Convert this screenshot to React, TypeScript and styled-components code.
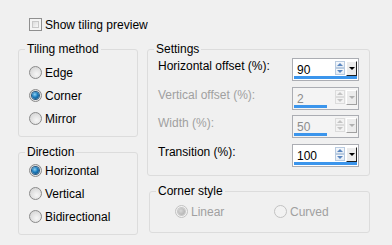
import styled, { createGlobalStyle, css } from "styled-components";

const GlobalStyle = createGlobalStyle`
    body {
        margin: 0;
        background-color: #f0f0f0;
        font-family: "Liberation Sans", Arial, sans-serif;
        font-size: 12px;
        color: #000;
    }
`;

const Page = styled.div`
    width: 392px;
    height: 245px;
    padding: 18px 0 0 18px;
    box-sizing: border-box;
    background-color: #f0f0f0;
`;

const TopRow = styled.label`
    display: flex;
    align-items: center;
    gap: 3px;
    height: 13px;
    padding-left: 11px;
`;

const CheckBox = styled.span`
    width: 13px;
    height: 13px;
    box-sizing: border-box;
    border: 1px solid #8f8f8f;
    background: #f4f4f4;
    padding: 2px;
    &::after {
        content: "";
        display: block;
        width: 100%;
        height: 100%;
        box-sizing: border-box;
        border: 1px solid #c8c8c8;
        background: linear-gradient(135deg, #dcdcdc, #f8f8f8);
    }
`;

const Columns = styled.div`
    display: flex;
    gap: 9px;
    margin-top: 11px;
`;

const Column = styled.div<{ w: number }>`
    display: flex;
    flex-direction: column;
    gap: 8px;
    width: ${(p) => p.w}px;
`;

const Group = styled.fieldset<{ h: number; pt: number; shift?: number }>`
    margin: 0 0 0 ${(p) => p.shift || 0}px;
    padding: ${(p) => p.pt}px 0 0 0;
    min-width: 0;
    width: calc(100% - ${(p) => p.shift || 0}px);
    height: ${(p) => p.h}px;
    box-sizing: border-box;
    border: 1px solid #dcdcdc;
    border-radius: 3px;
`;

const Legend = styled.legend`
    margin-left: 6px;
    padding: 0 2px;
    line-height: 14px;
    color: #000;
`;

const RadioList = styled.div`
    display: flex;
    flex-direction: column;
    padding-left: 10px;
`;

const RadioRow = styled.div<{ disabled?: boolean }>`
    display: flex;
    align-items: center;
    gap: 3px;
    height: 23px;
    color: ${(p) => (p.disabled ? "#a0a0a0" : "#000")};
`;

const Radio = styled.span<{ checked?: boolean; disabled?: boolean }>`
    position: relative;
    width: 13px;
    height: 13px;
    box-sizing: border-box;
    border-radius: 50%;
    border: 1px solid ${(p) => (p.disabled ? "#c2c2c2" : "#8a8a8a")};
    background: ${(p) =>
        p.disabled
            ? "#f2f2f2"
            : "radial-gradient(circle at 60% 65%, #f6f6f6 0%, #dedede 60%, #cfcfcf 100%)"};
    ${(p) =>
        p.checked &&
        css`
            &::after {
                content: "";
                position: absolute;
                left: 2px;
                top: 2px;
                width: 7px;
                height: 7px;
                border-radius: 50%;
                background: ${p.disabled
                    ? "radial-gradient(circle at 40% 40%, #d8d8d8, #a8a8a8)"
                    : "radial-gradient(circle at 40% 35%, #8fd2f4 0%, #1a7bbd 45%, #0c3f6a 100%)"};
                box-shadow: 0 0 0 1px ${p.disabled ? "#c8c8c8" : "#2a5a82"};
            }
        `}
`;

const SettingsGrid = styled.div`
    display: flex;
    flex-direction: column;
    gap: 5.67px;
    padding: 0 10px 0 9px;
`;

const SettingRow = styled.div<{ disabled?: boolean }>`
    display: grid;
    grid-template-columns: 1fr 67px;
    align-items: start;
    height: 23px;
    color: ${(p) => (p.disabled ? "#a0a0a0" : "#000")};
`;

const SettingLabel = styled.span`
    line-height: 16px;
    padding-left: 1px;
`;

const SpinBox = styled.div<{ disabled?: boolean }>`
    display: flex;
    flex-direction: column;
    width: 67px;
    height: 23px;
    box-sizing: border-box;
    border: 1px solid #abadb3;
    background: ${(p) => (p.disabled ? "#f4f4f4" : "#fff")};
`;

const SpinMain = styled.div`
    display: flex;
    height: 17px;
`;

const SpinValue = styled.span<{ disabled?: boolean }>`
    flex: 1;
    padding: 4px 0 0 4px;
    line-height: 14px;
    color: ${(p) => (p.disabled ? "#8c8c8c" : "#000")};
`;

const Arrows = styled.div`
    display: flex;
    flex-direction: column;
    padding-top: 2px;
    width: 10px;
`;

const ArrowBtn = styled.span<{ up?: boolean; disabled?: boolean }>`
    position: relative;
    height: 7px;
    box-sizing: border-box;
    border: 1px solid ${(p) => (p.disabled ? "#dcdcdc" : "#b9cbe0")};
    background: ${(p) => (p.disabled ? "#f3f3f3" : "linear-gradient(#f6f9fc, #e3ebf4)")};
    &::after {
        content: "";
        position: absolute;
        left: 1px;
        top: 1px;
        border-left: 3px solid transparent;
        border-right: 3px solid transparent;
        ${(p) =>
            p.up
                ? `border-bottom: 3px solid ${p.disabled ? "#c4c4c4" : "#5a86c0"};`
                : `border-top: 3px solid ${p.disabled ? "#c4c4c4" : "#5a86c0"};`}
    }
`;

const DropBtn = styled.span<{ disabled?: boolean }>`
    display: flex;
    align-items: center;
    justify-content: center;
    width: 11px;
    height: 15px;
    margin: 2px 1px 0 1px;
    box-sizing: border-box;
    border-right: 1px solid ${(p) => (p.disabled ? "#a0a0a0" : "#202020")};
    border-bottom: 1px solid ${(p) => (p.disabled ? "#a0a0a0" : "#202020")};
    border-top: 1px solid #fff;
    border-left: 1px solid #fff;
    background: #ececec;
    &::after {
        content: "";
        border-left: 3px solid transparent;
        border-right: 3px solid transparent;
        border-top: 3px solid ${(p) => (p.disabled ? "#b0b0b0" : "#000")};
    }
`;

const BarTrack = styled.div`
    height: 3px;
    margin: 0 1px;
`;

const Bar = styled.div`
    height: 100%;
    background: #3b95ec;
`;

const CornerOptions = styled.div`
    display: grid;
    grid-template-columns: 99px auto;
    padding: 2px 0 0 25px;
`;

type Setting = { label: string; value: string; fill: number; disabled?: boolean };

const settings: Setting[] = [
    { label: "Horizontal offset (%):", value: "90", fill: 100 },
    { label: "Vertical offset (%):", value: "2", fill: 53, disabled: true },
    { label: "Width (%):", value: "50", fill: 52, disabled: true },
    { label: "Transition (%):", value: "100", fill: 100 },
];

function Spin({ s }: { s: Setting }) {
    return (
        <SpinBox disabled={s.disabled}>
            <SpinMain>
                <SpinValue disabled={s.disabled}>{s.value}</SpinValue>
                <Arrows>
                    <ArrowBtn up disabled={s.disabled} />
                    <ArrowBtn disabled={s.disabled} />
                </Arrows>
                <DropBtn disabled={s.disabled} />
            </SpinMain>
            <BarTrack>
                <Bar style={{ width: `${s.fill}%` }} />
            </BarTrack>
        </SpinBox>
    );
}

function App() {
    const tiling = ["Edge", "Corner", "Mirror"];
    const direction = ["Horizontal", "Vertical", "Bidirectional"];
    return (
        <Page>
            <GlobalStyle />
            <TopRow>
                <CheckBox />
                <span>Show tiling preview</span>
            </TopRow>
            <Columns>
                <Column w={120}>
                    <Group h={95} pt={5}>
                        <Legend>Tiling method</Legend>
                        <RadioList>
                            {tiling.map((t) => (
                                <RadioRow key={t}>
                                    <Radio checked={t === "Corner"} />
                                    {t}
                                </RadioRow>
                            ))}
                        </RadioList>
                    </Group>
                    <Group h={90} pt={0}>
                        <Legend>Direction</Legend>
                        <RadioList>
                            {direction.map((d) => (
                                <RadioRow key={d}>
                                    <Radio checked={d === "Horizontal"} />
                                    {d}
                                </RadioRow>
                            ))}
                        </RadioList>
                    </Group>
                </Column>
                <Column w={223}>
                    <Group h={134} pt={2}>
                        <Legend>Settings</Legend>
                        <SettingsGrid>
                            {settings.map((s) => (
                                <SettingRow key={s.label} disabled={s.disabled}>
                                    <SettingLabel>{s.label}</SettingLabel>
                                    <Spin s={s} />
                                </SettingRow>
                            ))}
                        </SettingsGrid>
                    </Group>
                    <Group h={49} pt={0} shift={2}>
                        <Legend>Corner style</Legend>
                        <CornerOptions>
                            <RadioRow disabled>
                                <Radio checked disabled />
                                Linear
                            </RadioRow>
                            <RadioRow disabled>
                                <Radio disabled />
                                Curved
                            </RadioRow>
                        </CornerOptions>
                    </Group>
                </Column>
            </Columns>
        </Page>
    );
}

export default App;
